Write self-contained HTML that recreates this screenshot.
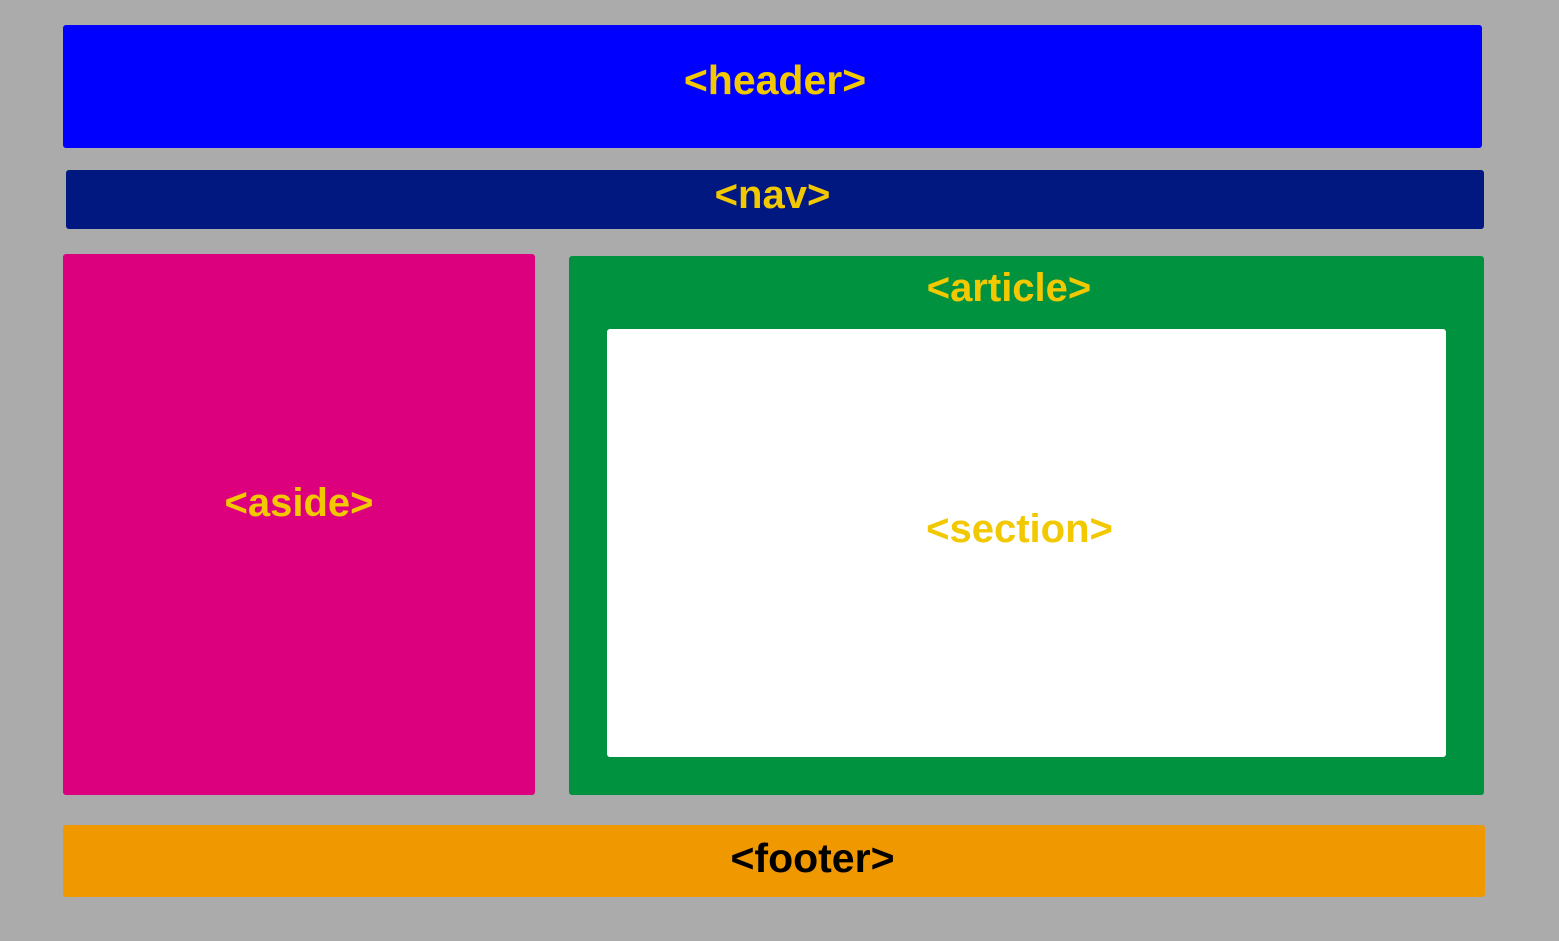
<!DOCTYPE html>
<html><head><style>
body{margin:0;width:1559px;height:941px;background:#ababab;position:relative;overflow:hidden;font-family:"Liberation Sans",sans-serif;}
.b{position:absolute;border-radius:3px;}
.t{position:absolute;left:0;right:0;text-align:center;font-weight:bold;font-size:40px;color:#f2c800;line-height:40px;}
</style></head><body>
<div class="b" style="left:63px;top:25px;width:1419px;height:123px;background:#0000ff"><div class="t" style="top:35px;left:5px;font-size:41px">&lt;header&gt;</div></div>
<div class="b" style="left:66px;top:170px;width:1418px;height:59px;background:#001880"><div class="t" style="top:5px;left:-5px">&lt;nav&gt;</div></div>
<div class="b" style="left:63px;top:254px;width:472px;height:541px;background:#dc007f"><div class="t" style="top:229px">&lt;aside&gt;</div></div>
<div class="b" style="left:569px;top:256px;width:915px;height:539px;background:#00923f"><div class="t" style="top:12px;left:-35px">&lt;article&gt;</div>
<div class="b" style="left:38px;top:73px;width:839px;height:428px;background:#fff"><div class="t" style="top:180px;left:-14px">&lt;section&gt;</div></div></div>
<div class="b" style="left:63px;top:825px;width:1422px;height:72px;background:#f09800"><div class="t" style="top:13px;left:77px;color:#000;font-size:41px">&lt;footer&gt;</div></div>
</body></html>
